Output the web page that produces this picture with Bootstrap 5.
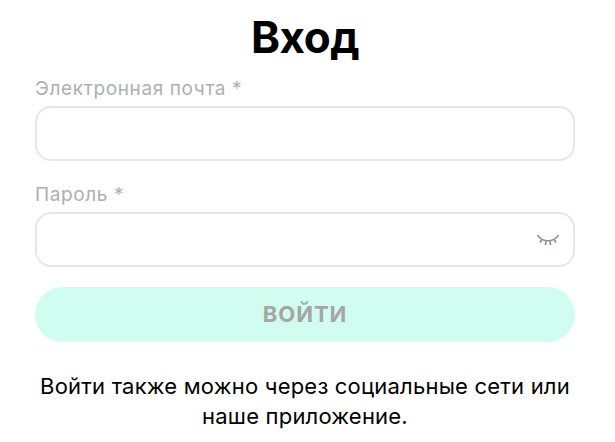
<!DOCTYPE html>
<html lang="ru"><head><meta charset="utf-8">
<link href="https://cdn.jsdelivr.net/npm/bootstrap@5.3.0/dist/css/bootstrap.min.css" rel="stylesheet">
<style>
html,body{height:442px;overflow:hidden;background:#fff}
body{font-family:"Inter","Noto Sans",sans-serif}
.login-wrap{padding:0 40px 0 35px}
.login-title{font-family:"Inter",sans-serif;font-weight:700;font-size:44px;line-height:52px;color:#000;margin:11px 0 0;letter-spacing:-.5px}
.field-label{display:block;font-size:19px;letter-spacing:.62px;line-height:26px;color:#aeaeb4;margin:0 0 4px;padding-top:1px}
.field-input{height:55px;border:2px solid #e6e6e8;border-radius:16px;box-shadow:none}
.field-gap{margin-bottom:20px}
.email-gap{padding-top:12px}
.eye-icon{position:absolute;right:16px;top:22px;width:22px;height:12px}
.login-btn{height:55px;background:#d0fdef;color:#a6a6a6;font-weight:700;font-size:22px;letter-spacing:1px;border:0;border-radius:28px;margin-top:20px}
.login-note{font-size:22px;line-height:30px;letter-spacing:.2px;color:#000;margin:29px -5px 0}
</style></head>
<body>
<div class="login-wrap">
<h1 class="login-title text-center">Вход</h1>
<form>
<div class="field-gap email-gap"><label class="field-label">Электронная почта *</label><input class="form-control field-input" type="email"></div>
<div class="position-relative"><label class="field-label">Пароль *</label>
<div class="position-relative"><input class="form-control field-input" type="password">
<svg class="eye-icon" viewBox="0 0 22 12" fill="none" stroke="#8c9196" stroke-width="1.700"><path d="M2 3c5 5 13 5 18 0"/><path d="M5 5.500 3 8.500M9 7 8.500 11M13 7l.5 4M17 5.500l2 3M2 3 .5 1M20 3l1.500-2"/></svg>
</div></div>
<button type="button" class="btn login-btn w-100 d-flex align-items-center justify-content-center">ВОЙТИ</button>
</form>
<p class="login-note text-center">Войти также можно через социальные сети или наше приложение.</p>
</div>
</body></html>
